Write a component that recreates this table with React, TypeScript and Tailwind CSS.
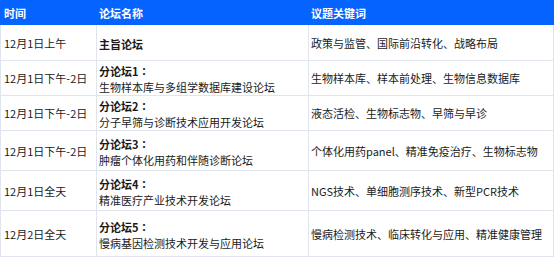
const rows = [
  { time: '12月1日上午', title: '主旨论坛', colon: false, sub: '', keys: '政策与监管、国际前沿转化、战略布局', h: 'h-[36px]' },
  { time: '12月1日下午-2日', title: '分论坛1', colon: true, sub: '生物样本库与多组学数据库建设论坛', keys: '生物样本库、样本前处理、生物信息数据库', h: 'h-[35px]' },
  { time: '12月1日下午-2日', title: '分论坛2', colon: true, sub: '分子早筛与诊断技术应用开发论坛', keys: '液态活检、生物标志物、早筛与早诊', h: 'h-[35px]' },
  { time: '12月1日下午-2日', title: '分论坛3', colon: true, sub: '肿瘤个体化用药和伴随诊断论坛', keys: '个体化用药panel、精准免疫治疗、生物标志物', h: 'h-[40px]' },
  { time: '12月1日全天', title: '分论坛4', colon: true, sub: '精准医疗产业技术开发论坛', keys: 'NGS技术、单细胞测序技术、新型PCR技术', h: 'h-[40px]' },
  { time: '12月2日全天', title: '分论坛5', colon: true, sub: '慢病基因检测技术开发与应用论坛', keys: '慢病检测技术、临床转化与应用、精准健康管理', h: 'h-[46px]' },
]

export default function App() {
  return (
    <div className="w-[554px] h-[259px] bg-white text-[11px] leading-[16px] text-[#1a1a1a] font-['Noto_Sans_CJK_SC','Liberation_Sans',sans-serif]">
      <div className="grid grid-cols-[97px_212px_245px]">
        <div className="h-[25px] bg-[#0563ff] text-white font-bold flex items-center pl-[4px]">时间</div>
        <div className="h-[25px] bg-[#0563ff] text-white font-bold flex items-center pl-[2px]">论坛名称</div>
        <div className="h-[25px] bg-[#0563ff] text-white font-bold flex items-center pl-[2px]">议题关键词</div>
        {rows.map((r, i) => (
          <div key={i} className="contents">
            <div className={`${r.h} border-l border-r border-b border-[#dfe4ee] flex items-center pl-[3px]`}>{r.time}</div>
            <div className={`${r.h} border-r border-b border-[#dfe4ee] flex flex-col justify-center pl-[2px] pt-[2px]`}>
              <span className="font-bold">
                {r.title}
                {r.colon && <span className="font-['Noto_Sans_CJK_TC',sans-serif]">：</span>}
              </span>
              {r.sub && <span>{r.sub}</span>}
            </div>
            <div className={`${r.h} border-r border-b border-[#dfe4ee] flex items-center pl-[2px]`}>{r.keys}</div>
          </div>
        ))}
      </div>
    </div>
  )
}
